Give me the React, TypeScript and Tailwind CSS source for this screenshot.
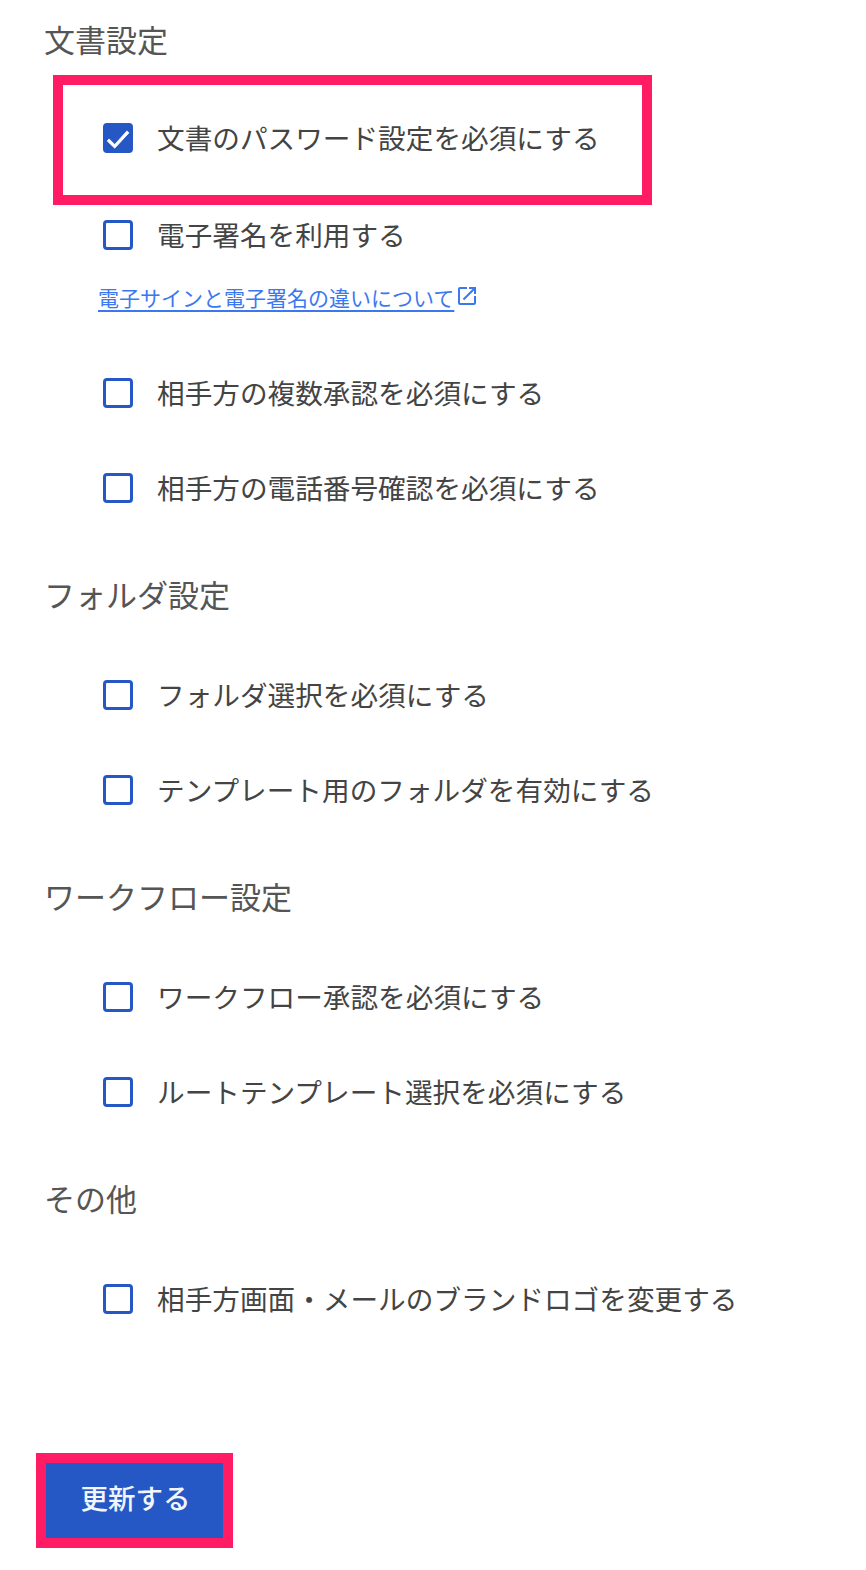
const font = { fontFamily: '"Noto Sans CJK JP", "Noto Sans", sans-serif' };

function CheckRow({ label, checked = false }: { label: string; checked?: boolean }) {
  return (
    <label className="flex h-[95px] items-center pl-[59px]">
      <span
        className={`flex h-[30px] w-[30px] shrink-0 items-center justify-center rounded-[4px] border-[3.5px] border-[#2558c5] ${
          checked ? 'bg-[#2558c5]' : 'bg-white'
        }`}
      >
        {checked && (
          <svg className="shrink-0" width="28" height="28" viewBox="0 0 24 24" fill="white" stroke="white" strokeWidth="0.7">
            <path d="M9.2 17.6L4.4 12.8l-1.7 1.7 6.5 6.2L21.4 7.6l-1.7-1.7z" />
          </svg>
        )}
      </span>
      <span className="ml-[24px] whitespace-nowrap text-[27.65px] leading-none text-[#444444]">{label}</span>
    </label>
  );
}

function SectionTitle({ children }: { children: string }) {
  return <h2 className="h-[40px] text-[31px] leading-[40px] font-normal text-[#555555]">{children}</h2>;
}

export default function App() {
  return (
    <div className="relative h-[1570px] w-[866px] overflow-hidden bg-white" style={font}>
      <div className="flex flex-col pt-[19px] pl-[44px]">
        <SectionTitle>文書設定</SectionTitle>
        <div className="mt-[31px]">
          <CheckRow label="文書のパスワード設定を必須にする" checked />
        </div>
        <div className="mt-[2px]">
          <CheckRow label="電子署名を利用する" />
        </div>
        <div className="flex h-[30px] items-center pl-[54px]">
          <a className="text-[21px] leading-none whitespace-nowrap text-[#3b78f0] underline underline-offset-4">
            電子サインと電子署名の違いについて
          </a>
          <svg className="ml-[1px] -translate-y-[1px]" width="24" height="24" viewBox="0 0 24 24" fill="#3b78f0">
            <path d="M19 19H5V5h7V3H5a2 2 0 0 0-2 2v14a2 2 0 0 0 2 2h14c1.1 0 2-.9 2-2v-7h-2v7zM14 3v2h3.59l-9.83 9.83 1.41 1.41L19 6.41V10h2V3h-7z" />
          </svg>
        </div>
        <div className="mt-[33px]">
          <CheckRow label="相手方の複数承認を必須にする" />
          <CheckRow label="相手方の電話番号確認を必須にする" />
        </div>

        <div className="mt-[39px]">
          <SectionTitle>フォルダ設定</SectionTitle>
        </div>
        <div className="mt-[33px]">
          <CheckRow label="フォルダ選択を必須にする" />
          <CheckRow label="テンプレート用のフォルダを有効にする" />
        </div>

        <div className="mt-[39px]">
          <SectionTitle>ワークフロー設定</SectionTitle>
        </div>
        <div className="mt-[33px]">
          <CheckRow label="ワークフロー承認を必須にする" />
          <CheckRow label="ルートテンプレート選択を必須にする" />
        </div>

        <div className="mt-[39px]">
          <SectionTitle>その他</SectionTitle>
        </div>
        <div className="mt-[33px]">
          <CheckRow label="相手方画面・メールのブランドロゴを変更する" />
        </div>
      </div>

      <button className="absolute top-[1463px] left-[46px] h-[75px] w-[177px] bg-[#2558c5] pb-[5px] pl-[2px] text-[27.5px] font-medium text-[#f2f5fc]">
        更新する
      </button>

      {/* annotation frames */}
      <div className="pointer-events-none absolute top-[75px] left-[53px] h-[130px] w-[599px] border-[10px] border-[#ff1c64]" />
      <div className="pointer-events-none absolute top-[1453px] left-[36px] h-[95px] w-[197px] border-[10px] border-[#ff1c64]" />
    </div>
  );
}
